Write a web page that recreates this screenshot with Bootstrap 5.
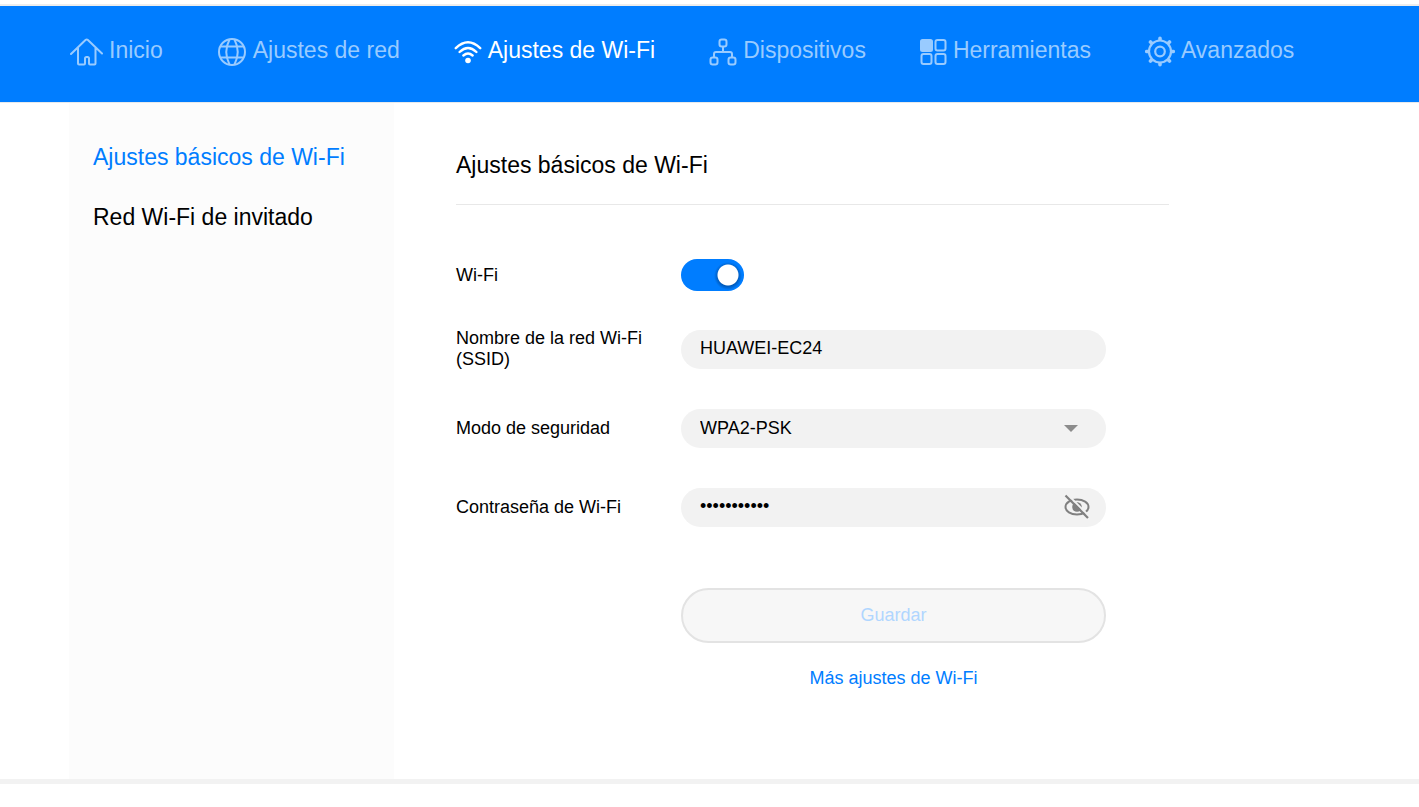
<!DOCTYPE html>
<html lang="es">
<head>
<meta charset="utf-8">
<meta name="viewport" content="width=device-width, initial-scale=1">
<title>Ajustes básicos de Wi-Fi</title>
<link href="https://cdn.jsdelivr.net/npm/bootstrap@5.3.0/dist/css/bootstrap.min.css" rel="stylesheet">
<style>
  :root { --accent: #007dff; --field: #f2f2f2; --edge: 69px; }
  body { font-family: "Liberation Sans", Arial, sans-serif; font-size: 18px; line-height: 21px; color: #000; background: #fff; }
  .topbar { margin-top: 4px; border-top: 2px solid #ededed; border-bottom: 1px solid #e6e9ec; }
  .topnav { background: var(--accent); min-height: 96px; padding: 0 var(--edge) 8px; column-gap: 54px; }
  .topnav .nav-link { color: #99cbff; font-size: 23px; line-height: 28px; padding: 0; gap: 6px; }
  .topnav .nav-link.active, .topnav .nav-link:hover { color: #fff; }
  .topnav svg { margin-top: 3px; }
  .shell { padding: 0 var(--edge); border-bottom: 5px solid #f2f2f2; }
  .sidebar { width: 325px; min-height: 676px; padding: 39px 24px; background: #fcfcfc; gap: 30px; }
  .sidebar a { font-size: 23px; line-height: 30px; color: #000; text-decoration: none; }
  .sidebar a.active, .more { color: var(--accent); }
  .more { text-decoration: none; }
  .panel { max-width: 775px; padding: 47px 0 48px 62px; }
  .panel h1 { font-size: 23px; line-height: 30px; font-weight: 400; padding-bottom: 24px; border-bottom: 1px solid #e8e8e8; margin-bottom: 54px; }
  .settings { gap: 37px; }
  .setting { min-height: 42px; }
  .caption { width: 225px; padding-right: 36px; }
  .control { width: 425px; }
  .field, .field:focus { height: 39px; border: 0; border-radius: 20px; background-color: var(--field); color: #000; font-size: 18px; line-height: 21px; padding: 8px 60px 10px 19px; }
  .field.form-select { padding: 9px 60px 9px 19px; background-size: 14px 7px; background-position: right 28px center;
    background-image: url("data:image/svg+xml,%3Csvg xmlns='http://www.w3.org/2000/svg' viewBox='0 0 14 7'%3E%3Cpath fill='%238c8c8c' d='M0 0h14L7 7z'/%3E%3C/svg%3E"); }
  .switch.form-check-input { width: 63px; height: 32px; margin: 0; border: 0; border-radius: 16px; float: none; }
  .form-switch .switch.form-check-input:checked { background-color: var(--accent);
    background-image: radial-gradient(circle at 47px 16px, #fff 10px, transparent 11px), radial-gradient(circle at 47px 17px, #0058b8 10px, transparent 14px); }
  .reveal { right: 16px; top: 6px; line-height: 0; color: #808080; }
  .save { height: 55px; border: 2px solid #e3e3e3; border-radius: 28px; font-size: 18px; margin: 60px 0 25px; }
  .save.btn:disabled { background: #f7f7f7; color: #b0d6ff; border-color: #e3e3e3; opacity: 1; }
</style>
</head>
<body>
<header class="topbar">
  <nav class="topnav nav d-flex align-items-center" aria-label="Principal">
    <a class="nav-link d-flex align-items-center" href="#">
      <svg width="34" height="30" viewBox="0 0 34 30" fill="none" stroke="currentColor" stroke-width="2" stroke-linecap="round" stroke-linejoin="round"><path d="M2 17 16.500 3q1.200-1 2.400 0L33 16.500M9 11v15.500q0 1 1 1h5q1 0 1-1v-5q0-1.500 1.500-1.500h1q1.500 0 1.500 1.500v5q0 1 1 1h4.500q1 0 1-1V11"/></svg>Inicio</a>
    <a class="nav-link d-flex align-items-center" href="#">
      <svg width="30" height="30" viewBox="0 0 30 30" fill="none" stroke="currentColor" stroke-width="2"><circle cx="15" cy="15" r="13"/><path d="M3.500 9.500h23M3.500 20.500h23M12.500 2.500Q6 15 12.500 27.500M17.500 2.500Q24 15 17.500 27.500"/></svg>Ajustes de red</a>
    <a class="nav-link active d-flex align-items-center" href="#" aria-current="page">
      <svg width="28" height="26" viewBox="0 0 28 26" fill="none" stroke="currentColor" stroke-width="2.400" stroke-linecap="round"><path d="M1.800 9.200Q14-2.600 26.200 9.200M5.600 13Q14 5 22.400 13M9.400 16.500Q14 12.400 18.600 16.500"/><circle cx="14" cy="21.500" r="2.800" fill="currentColor" stroke="none"/></svg>Ajustes de Wi-Fi</a>
    <a class="nav-link d-flex align-items-center" href="#">
      <svg width="28" height="28" viewBox="0 0 28 28" fill="none" stroke="currentColor" stroke-width="2"><rect x="10.500" y="1.500" width="7" height="7" rx="2.200"/><rect x="1.500" y="19.500" width="7" height="7" rx="2.200"/><rect x="19.500" y="19.500" width="7" height="7" rx="2.200"/><path d="M14 8.500V14M5 19.500V16q0-2 2-2h14q2 0 2 2v3.500"/></svg>Dispositivos</a>
    <a class="nav-link d-flex align-items-center" href="#">
      <svg width="27" height="28" viewBox="0 0 27 28" fill="none" stroke="currentColor" stroke-width="2"><rect x="1" y="2" width="11" height="11" rx="1.500" fill="currentColor"/><rect x="15.500" y="2" width="10" height="10.500" rx="2"/><rect x="1.500" y="16" width="10" height="10" rx="2"/><rect x="15.500" y="16" width="10" height="10" rx="2"/></svg>Herramientas</a>
    <a class="nav-link d-flex align-items-center" href="#">
      <svg width="30" height="31" viewBox="-15 -15.500 30 31" fill="none" stroke="currentColor" stroke-width="2.200"><circle r="11"/><circle r="4.800"/><g stroke-width="3.600" stroke-linecap="round"><path d="M0-12v-1.300M0 12v1.300M-12 0h-1.300M12 0h1.300M8.700-8.700l.8-.8M8.700 8.700l.8.8M-8.700 8.700l-.8.8M-8.700-8.700l-.8-.8"/></g></svg>Avanzados</a>
  </nav>
</header>

<div class="shell d-flex">
  <aside class="sidebar d-flex flex-column flex-shrink-0">
    <a class="active" href="#" aria-current="page">Ajustes básicos de Wi-Fi</a>
    <a href="#">Red Wi-Fi de invitado</a>
  </aside>
  <main class="panel flex-grow-1">
    <h1>Ajustes básicos de Wi-Fi</h1>
    <form>
      <div class="settings d-flex flex-column">
        <div class="d-flex align-items-center">
          <label class="caption" for="wifi">Wi-Fi</label>
          <div class="control form-switch p-0 m-0 d-flex"><input class="switch form-check-input" type="checkbox" role="switch" id="wifi" checked></div>
        </div>
        <div class="setting d-flex align-items-center">
          <label class="caption" for="ssid">Nombre de la red Wi-Fi (SSID)</label>
          <div class="control"><input class="field form-control" type="text" id="ssid" value="HUAWEI-EC24"></div>
        </div>
        <div class="setting d-flex align-items-center">
          <label class="caption" for="mode">Modo de seguridad</label>
          <div class="control"><select class="field form-select" id="mode"><option>WPA2-PSK</option></select></div>
        </div>
        <div class="setting d-flex align-items-center">
          <label class="caption" for="pass">Contraseña de Wi-Fi</label>
          <div class="control position-relative">
            <input class="field form-control" type="password" id="pass" value="contrasenia">
            <button class="reveal btn p-0 border-0 position-absolute" type="button" aria-label="Mostrar contraseña">
              <svg width="26" height="26" viewBox="0 0 26 26" fill="none" stroke="currentColor" stroke-width="2"><ellipse cx="13" cy="13" rx="11.500" ry="7.500"/><circle cx="13" cy="13" r="4.800" fill="currentColor" stroke="none"/><path stroke="#f2f2f2" d="M3.500.5l22 22"/><path stroke-width="2.200" d="M1.500 1.500l22.500 22.500"/></svg>
            </button>
          </div>
        </div>
      </div>
      <div class="d-flex">
        <div class="caption"></div>
        <div class="control text-center">
          <button class="save btn w-100" type="submit" disabled>Guardar</button>
          <a class="more" href="#">Más ajustes de Wi-Fi</a>
        </div>
      </div>
    </form>
  </main>
</div>
<script src="https://cdn.jsdelivr.net/npm/bootstrap@5.3.0/dist/js/bootstrap.bundle.min.js"></script>
</body>
</html>
